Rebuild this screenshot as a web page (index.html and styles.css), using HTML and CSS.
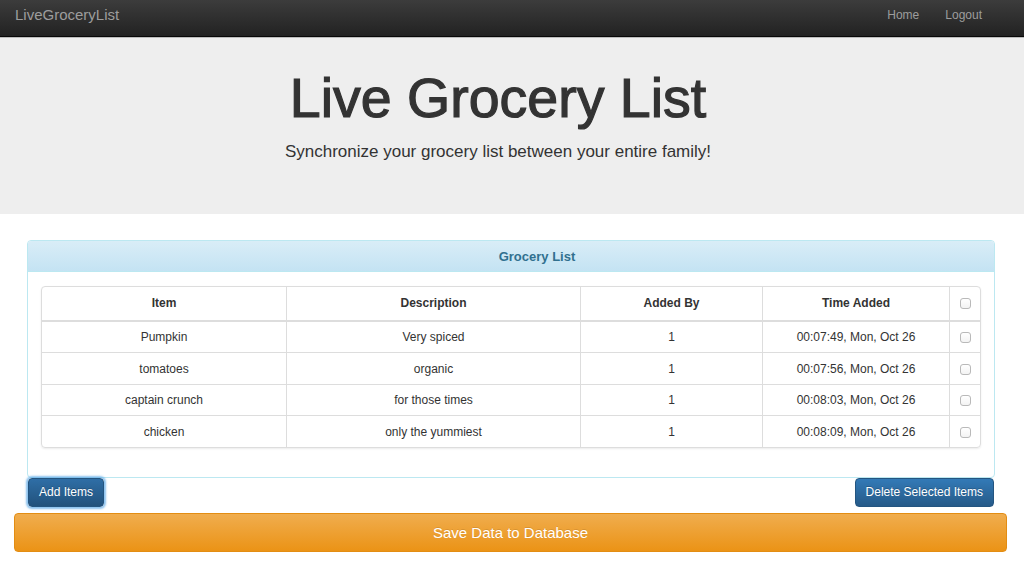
FILE: index.html
```html
<!DOCTYPE html>
<html lang="en">
<head>
<meta charset="utf-8">
<title>LiveGroceryList</title>
<link rel="stylesheet" href="styles.css">
</head>
<body>
<nav class="navbar">
  <a class="brand" href="#">LiveGroceryList</a>
  <ul class="nav-links">
    <li><a href="#">Home</a></li>
    <li><a href="#">Logout</a></li>
  </ul>
</nav>
<header class="jumbotron">
  <h1>Live Grocery List</h1>
  <p>Synchronize your grocery list between your entire family!</p>
</header>
<main class="main">
  <section class="panel">
    <div class="panel-heading">Grocery List</div>
    <div class="panel-body">
      <div class="table-wrap">
        <table class="grocery-table">
          <colgroup>
            <col class="c-item"><col class="c-desc"><col class="c-by"><col class="c-time"><col class="c-check">
          </colgroup>
          <thead>
            <tr><th>Item</th><th>Description</th><th>Added By</th><th>Time Added</th><th><input type="checkbox" class="check"></th></tr>
          </thead>
          <tbody>
            <tr><td>Pumpkin</td><td>Very spiced</td><td>1</td><td>00:07:49, Mon, Oct 26</td><td><input type="checkbox" class="check"></td></tr>
            <tr><td>tomatoes</td><td>organic</td><td>1</td><td>00:07:56, Mon, Oct 26</td><td><input type="checkbox" class="check"></td></tr>
            <tr><td>captain crunch</td><td>for those times</td><td>1</td><td>00:08:03, Mon, Oct 26</td><td><input type="checkbox" class="check"></td></tr>
            <tr><td>chicken</td><td>only the yummiest</td><td>1</td><td>00:08:09, Mon, Oct 26</td><td><input type="checkbox" class="check"></td></tr>
          </tbody>
        </table>
      </div>
    </div>
  </section>
  <div class="actions">
    <button class="btn btn-primary btn-focus">Add Items</button>
    <button class="btn btn-primary">Delete Selected Items</button>
  </div>
  <button class="btn-save">Save Data to Database</button>
</main>
</body>
</html>
```

FILE: styles.css
```css
* { box-sizing: border-box; }
html, body { margin: 0; padding: 0; }
body {
  font-family: "Liberation Sans", Arial, Helvetica, sans-serif;
  color: #333;
  background: #fff;
  width: 1024px;
  height: 570px;
  overflow: hidden;
}

/* Navbar */
.navbar {
  display: flex;
  justify-content: space-between;
  align-items: flex-start;
  height: 37px;
  padding: 0 42px 0 15px;
  background: linear-gradient(to bottom, #3c3c3c 0%, #222 100%);
  border-bottom: 1px solid #080808;
  box-shadow: 0 1px 0 #bdbdbd;
}
.brand {
  font-size: 15px;
  line-height: 30px;
  color: #9d9d9d;
  text-decoration: none;
}
.nav-links {
  list-style: none;
  margin: 0;
  padding: 0;
  display: flex;
  gap: 26px;
}
.nav-links a {
  font-size: 12px;
  line-height: 30px;
  color: #9d9d9d;
  text-decoration: none;
}

/* Jumbotron */
.jumbotron {
  background: #eee;
  text-align: center;
  padding: 30px 28px 50px 0;
  margin-top: 1px;
}
.jumbotron h1 {
  margin: 0 0 11px;
  font-size: 55.5px;
  line-height: 1.1;
  font-weight: 400;
  color: #333;
  -webkit-text-stroke: 1.2px #333;
}
.jumbotron p {
  margin: 0;
  font-size: 17px;
  line-height: 1.4;
  font-weight: 300;
  color: #333;
}

/* Main */
.main {
  padding-top: 26px;
}
.panel {
  margin: 0 29px 0 27px;
  border: 1px solid #bce8f1;
  border-radius: 4px;
}
.panel-heading {
  height: 31px;
  line-height: 31px;
  text-align: center;
  padding-left: 52px;
  font-size: 13px;
  font-weight: 700;
  color: #31708f;
  background: linear-gradient(to bottom, #d9edf7 0%, #c4e3f3 100%);
  border-bottom: 1px solid #bce8f1;
  border-radius: 3px 3px 0 0;
}
.panel-body {
  padding: 14px 13px 29px;
}
.table-wrap {
  border: 1px solid #ddd;
  border-radius: 4px;
  box-shadow: 0 1px 2px rgba(0, 0, 0, 0.08);
  overflow: hidden;
}
.grocery-table {
  width: 100%;
  table-layout: fixed;
  border-collapse: separate;
  border-spacing: 0;
  font-size: 12px;
}
.c-item { width: 245px; }
.c-desc { width: 294px; }
.c-by { width: 182px; }
.c-time { width: 187px; }
.c-check { width: 30px; }
.grocery-table th,
.grocery-table td {
  text-align: center;
  vertical-align: middle;
  padding: 0 6px;
  border-right: 1px solid #ddd;
  border-bottom: 1px solid #ddd;
}
.grocery-table th:last-child,
.grocery-table td:last-child { border-right: 0; padding: 0; }
.grocery-table tbody tr:last-child td { border-bottom: 0; }
.grocery-table th {
  height: 35px;
  font-weight: 700;
  border-bottom-width: 2px;
}
.grocery-table td { height: 31.5px; }
.grocery-table tbody tr:last-child td { height: 31px; }
.check {
  -webkit-appearance: none;
  appearance: none;
  display: block;
  margin: 1px auto 0;
  width: 11px;
  height: 11px;
  border: 1px solid #b9b9b9;
  border-radius: 3px;
  background: linear-gradient(to bottom, #fff, #f3f3f3);
}

/* Buttons */
.actions {
  display: flex;
  justify-content: space-between;
  margin: 0 30px 0 28px;
}
.btn {
  font-family: inherit;
  font-size: 12px;
  line-height: 27px;
  height: 29px;
  padding: 0 10px;
  border-radius: 4px;
  cursor: pointer;
}
.btn-primary {
  color: #fff;
  background: linear-gradient(to bottom, #337ab7 0%, #265a88 100%);
  border: 1px solid #245580;
  text-shadow: 0 -1px 0 rgba(0, 0, 0, 0.2);
}
.btn-focus {
  background: linear-gradient(to bottom, #2f6ea6 0%, #22527c 100%);
  box-shadow: 0 0 2px 2px rgba(102, 175, 233, 0.75);
}
.btn-save {
  display: block;
  width: 993px;
  height: 39px;
  margin: 6px 0 0 14px;
  font-family: inherit;
  font-size: 15px;
  color: #fff;
  background: linear-gradient(to bottom, #f0ad4e 0%, #eb9316 100%);
  border: 1px solid #e38d13;
  border-radius: 4px;
  text-shadow: 0 -1px 0 rgba(0, 0, 0, 0.1);
  cursor: pointer;
}
```
